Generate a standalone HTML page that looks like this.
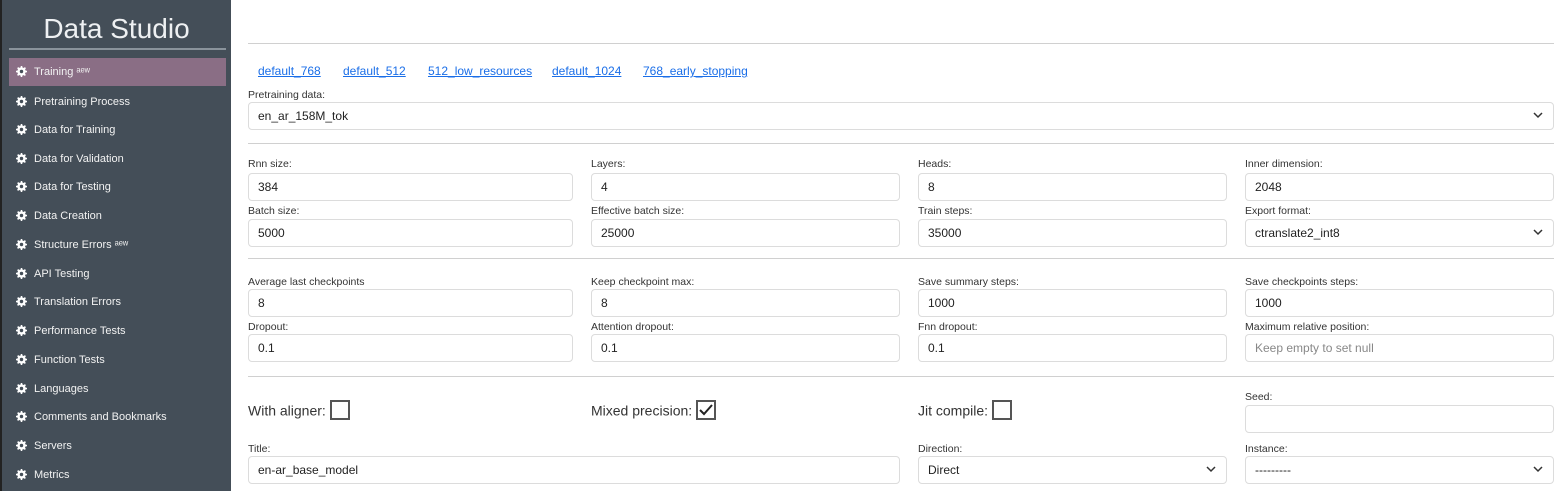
<!DOCTYPE html><html><head><style>
*{box-sizing:border-box;margin:0;padding:0}
body{width:1560px;height:491px;overflow:hidden;background:#fff;font-family:"Liberation Sans",sans-serif;position:relative}
#sb{position:absolute;left:0;top:0;width:231px;height:491px;background:#444e58;border-left:2px solid #222}
#sb h1{position:absolute;left:0;width:229px;top:13px;text-align:center;font-weight:normal;font-size:28px;color:#eef0f2}
#sb .hr{position:absolute;left:7px;width:217px;top:48px;height:2px;background:#8a939b}
.it{position:absolute;left:7px;width:217px;height:28px;color:#f2f2f2;font-size:11px;line-height:28px;padding-left:25px}
.it.a{background:#8a6e85}
.it svg{position:absolute;left:7px;top:8px}
.hrm{position:absolute;left:248px;width:1306px;height:1px;background:#d0d0d0}
.lb{position:absolute;font-size:10.5px;color:#333}
.in{position:absolute;height:28px;border:1px solid #dcdcdc;border-radius:4px;font-size:12px;color:#222;padding:0 9px;line-height:26px}
.in.ph{color:#888}
.chev{position:absolute;right:10px;top:9px}
.lk{position:absolute;top:64px;font-size:12px;color:#1a6ee8;text-decoration:underline}
.cb{position:absolute;font-size:14px;color:#333;top:402px}
.box{display:inline-block;width:20px;height:20px;border:2px solid #555;vertical-align:middle;margin-left:4px;position:relative;top:-2px}
</style></head><body>
<div id="sb"><h1>Data Studio</h1><div class="hr"></div>
<div class="it a" style="top:58px">Training ᵃᵉʷ</div>
<div class="it" style="top:88px">Pretraining Process</div>
<div class="it" style="top:116px">Data for Training</div>
<div class="it" style="top:145px">Data for Validation</div>
<div class="it" style="top:173px">Data for Testing</div>
<div class="it" style="top:202px">Data Creation</div>
<div class="it" style="top:231px">Structure Errors ᵃᵉʷ</div>
<div class="it" style="top:260px">API Testing</div>
<div class="it" style="top:288px">Translation Errors</div>
<div class="it" style="top:317px">Performance Tests</div>
<div class="it" style="top:346px">Function Tests</div>
<div class="it" style="top:375px">Languages</div>
<div class="it" style="top:403px">Comments and Bookmarks</div>
<div class="it" style="top:432px">Servers</div>
<div class="it" style="top:461px">Metrics</div>
</div>
<div class="hrm" style="top:43px"></div>
<span class="lk" style="left:258px">default_768</span><span class="lk" style="left:343px">default_512</span><span class="lk" style="left:428px">512_low_resources</span><span class="lk" style="left:552px">default_1024</span><span class="lk" style="left:643px">768_early_stopping</span>
<div class="lb" style="left:248px;top:89px">Pretraining data:</div>
<div class="in" style="left:248px;top:102px;width:1306px">en_ar_158M_tok<svg class="chev" width="10" height="7"><path d="M1 1l4 4 4-4" stroke="#333" stroke-width="1.5" fill="none"/></svg></div>
<div class="hrm" style="top:143px"></div>
<div id="f"></div>
<div class="hrm" style="top:258px"></div>
<div class="hrm" style="top:376px"></div>
<div class="cb" style="left:248px">With aligner:<span class="box"></span></div>
<div class="cb" style="left:591px">Mixed precision:<span class="box"><svg width="16" height="16" style="position:absolute;left:0;top:0"><path d="M2 8l4 4 8-9" stroke="#222" stroke-width="2" fill="none"/></svg></span></div>
<div class="cb" style="left:918px">Jit compile:<span class="box"></span></div>
<script>
var C=[248,591,918,1245],W=[325,309,309,309];
var rows=[[158,173,["Rnn size:","384"],["Layers:","4"],["Heads:","8"],["Inner dimension:","2048"]],
[205,219,["Batch size:","5000"],["Effective batch size:","25000"],["Train steps:","35000"],["Export format:","ctranslate2_int8",1]],
[276,289,["Average last checkpoints","8"],["Keep checkpoint max:","8"],["Save summary steps:","1000"],["Save checkpoints steps:","1000"]],
[321,334,["Dropout:","0.1"],["Attention dropout:","0.1"],["Fnn dropout:","0.1"],["Maximum relative position:","Keep empty to set null",0,1]]];
var h="";
function fld(x,w,ly,iy,l,v,s,p){h+='<div class="lb" style="left:'+x+'px;top:'+ly+'px">'+l+'</div><div class="in'+(p?' ph':'')+'" style="left:'+x+'px;top:'+iy+'px;width:'+w+'px">'+v+(s?'<svg class="chev" width="10" height="7"><path d="M1 1l4 4 4-4" stroke="#333" stroke-width="1.5" fill="none"/></svg>':'')+'</div>';}
rows.forEach(function(r){for(var i=0;i<4;i++){var f=r[i+2];fld(C[i],W[i],r[0],r[1],f[0],f[1],f[2],f[3]);}});
fld(1245,309,391,405,"Seed:","");
fld(248,652,443,456,"Title:","en-ar_base_model");
fld(918,309,443,456,"Direction:","Direct",1);
fld(1245,309,443,456,"Instance:","---------",1);
document.getElementById("f").innerHTML=h;
var g='<svg width="11" height="11" viewBox="0 0 16 16"><path fill="#fff" d="M7 0h2l.5 2.2 1.6.7 1.9-1.2 1.4 1.4-1.2 1.9.7 1.6L16 7v2l-2.2.5-.7 1.6 1.2 1.9-1.4 1.4-1.9-1.2-1.6.7L9 16H7l-.5-2.2-1.6-.7-1.9 1.2-1.4-1.4 1.2-1.9-.7-1.6L0 9V7l2.2-.5.7-1.6-1.2-1.9 1.4-1.4 1.9 1.2 1.6-.7z"/><circle cx="8" cy="8" r="2.5" fill="#444e58"/></svg>';
document.querySelectorAll(".it").forEach(function(e){e.insertAdjacentHTML("afterbegin",g)});
</script>
</body></html>
